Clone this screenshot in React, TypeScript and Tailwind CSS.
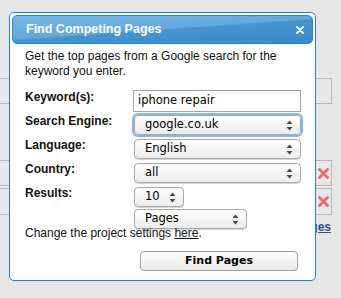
import React from "react";

const sans = "font-['Liberation_Sans',Arial,sans-serif]";
const mac = "font-['DejaVu_Sans',sans-serif]";

function Arrows() {
  return (
    <svg width="7" height="11" viewBox="0 0 7 11" className="shrink-0">
      <path d="M3.5 0.5 L6.5 4 L0.5 4 Z" fill="#4a4a4a" />
      <path d="M3.5 10.5 L6.5 7 L0.5 7 Z" fill="#4a4a4a" />
    </svg>
  );
}

function Select({
  value,
  width = "w-[168px]",
  focused = false,
}: {
  value: string;
  width?: string;
  focused?: boolean;
}) {
  return (
    <div
      className={`${width} h-[20px] flex items-center justify-between pl-[10px] pr-[7px] rounded-[4px] border border-[#a9a9a9] bg-gradient-to-b from-white to-[#ececec] text-[11.5px] text-black ${mac} ${
        focused ? "shadow-[0_0_1px_2px_#86b0e0]" : "shadow-[0_1px_0_#d8d8d8]"
      }`}
    >
      <span>{value}</span>
      <Arrows />
    </div>
  );
}

function RedX() {
  return (
    <svg width="11" height="11" viewBox="0 0 11 11">
      <path d="M1.5 1.5 L9.5 9.5 M9.5 1.5 L1.5 9.5" stroke="#e76b6b" strokeWidth="2.8" strokeLinecap="round" />
    </svg>
  );
}

function Row({ label, children }: { label: string; children: React.ReactNode }) {
  return (
    <div className="flex items-start h-[24px]">
      <div className={`w-[108px] pt-[1px] text-[12px] leading-[15px] font-bold text-[#111] ${sans}`}>
        {label}
      </div>
      {children}
    </div>
  );
}

export default function App() {
  return (
    <div className={`relative w-[341px] h-[298px] overflow-hidden bg-[#e7e7e7] ${sans}`}>
      {/* page behind the dialog */}
      <div className="flex flex-col pt-[78px]">
        <div className="w-[332px] h-[26px] border-y border-r border-[#b9b9b9] flex justify-end">
          <div className="w-[17px] border-l border-[#b9b9b9]" />
        </div>
        <div className="mt-[56px] w-[332px] h-[26px] border-y border-r border-[#b9b9b9] flex justify-end">
          <div className="w-[17px] border-l border-[#b9b9b9] flex items-center justify-center">
            <RedX />
          </div>
        </div>
        <div className="mt-[2px] w-[332px] h-[27px] border-y border-r border-[#b9b9b9] flex justify-end">
          <div className="w-[17px] border-l border-[#b9b9b9] flex items-center justify-center">
            <RedX />
          </div>
        </div>
        <div className="w-[331px] mt-[3px] text-right text-[12px] font-bold text-[#2b4f93] underline">
          Find Pages
        </div>
      </div>

      {/* dialog */}
      <div className="absolute left-[9px] top-[12px] w-[307px] h-[269px] bg-white border border-[#2a7ebf] rounded-[5px] p-[2px]">
        <div className="h-[29px] rounded-[5px] border border-[#3383c3] bg-[linear-gradient(176deg,#78b7e5_0%,#64a9de_48%,#4593d0_52%,#3a8bca_100%)] flex items-center justify-between pl-[13px] pr-[8px]">
          <span className="text-white font-bold text-[12.5px] leading-none">Find Competing Pages</span>
          <svg width="8" height="8" viewBox="0 0 8 8">
            <path d="M1 1 L7 7 M7 1 L1 7" stroke="#eef4fa" strokeWidth="2" strokeLinecap="round" />
          </svg>
        </div>

        <div className="pl-[13px] pr-[12px] pt-[5px]">
          <p className="text-[12px] leading-[15px] text-[#111]">
            Get the top pages from a Google search for the keyword you enter.
          </p>

          <div className="mt-[10px] flex flex-col">
            <Row label="Keyword(s):">
              <div className={`w-[168px] h-[22px] mt-px border border-[#a4a4a4] bg-white flex items-center pl-[4px] text-[11.5px] ${mac}`}>
                iphone repair
              </div>
            </Row>
            <Row label="Search Engine:">
              <div className="mt-[2px] ml-px">
                <Select value="google.co.uk" width="w-[167px]" focused />
              </div>
            </Row>
            <Row label="Language:">
              <div className="mt-[2px] ml-px">
                <Select value="English" width="w-[167px]" />
              </div>
            </Row>
            <Row label="Country:">
              <div className="mt-[2px] ml-px">
                <Select value="all" width="w-[167px]" />
              </div>
            </Row>
            <Row label="Results:">
              <div className="mt-[2px] ml-px flex flex-col gap-[2px]">
                <Select value="10" width="w-[50px]" />
                <Select value="Pages" width="w-[113px]" />
              </div>
            </Row>
          </div>

          <p className="mt-[17px] text-[12px] leading-[15px] text-[#111]">
            Change the project settings <span className="underline">here</span>.
          </p>

          <div className="mt-[10px] flex justify-end pr-[3px]">
            <div className={`w-[158px] h-[20px] rounded-[4px] border border-[#a3a3a3] bg-gradient-to-b from-white to-[#e9e9e9] flex items-center justify-center text-[11px] font-bold text-black ${mac}`}>
              Find Pages
            </div>
          </div>
        </div>
      </div>
    </div>
  );
}
